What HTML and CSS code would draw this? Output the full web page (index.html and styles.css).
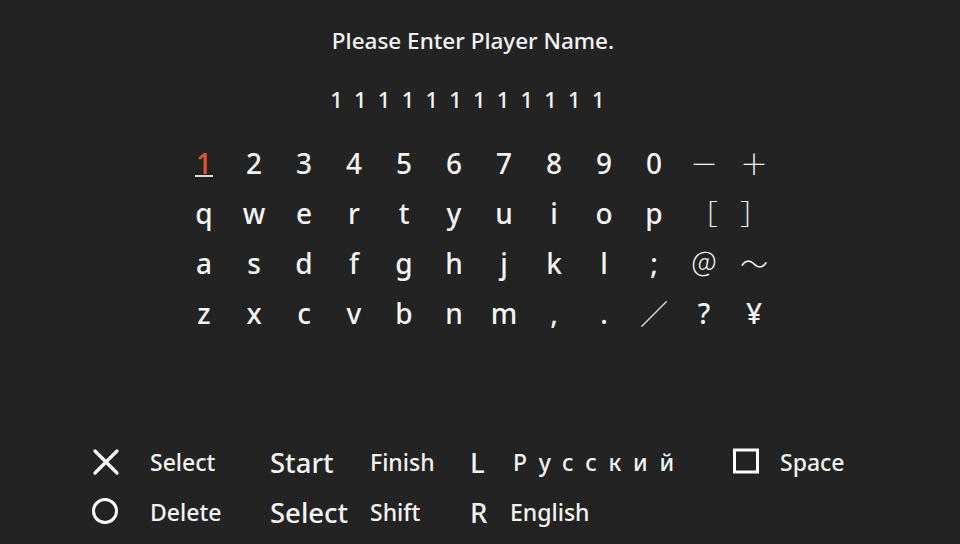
FILE: index.html
```html
<!DOCTYPE html>
<html lang="en">
<head>
    <meta charset="UTF-8">
    <meta name="viewport" content="width=device-width, initial-scale=1.0">
    <title>Enter Name</title>
    <link rel="stylesheet" href="styles.css">
</head>
<body>
    <main class="screen">
        <h1 class="prompt">Please Enter Player Name.</h1>
        <p class="name">111111111111</p>

        <!-- Character grid -->
        <section class="keys">
            <span class="key active">1</span><span class="key">2</span><span class="key">3</span><span class="key">4</span><span class="key">5</span><span class="key">6</span><span class="key">7</span><span class="key">8</span><span class="key">9</span><span class="key">0</span><span class="key wide">－</span><span class="key wide">＋</span>
            <span class="key">q</span><span class="key">w</span><span class="key">e</span><span class="key">r</span><span class="key">t</span><span class="key">y</span><span class="key">u</span><span class="key">i</span><span class="key">o</span><span class="key">p</span><span class="key wide">［</span><span class="key wide">］</span>
            <span class="key">a</span><span class="key">s</span><span class="key">d</span><span class="key">f</span><span class="key">g</span><span class="key">h</span><span class="key">j</span><span class="key">k</span><span class="key">l</span><span class="key">;</span><span class="key wide">＠</span><span class="key wide">～</span>
            <span class="key">z</span><span class="key">x</span><span class="key">c</span><span class="key">v</span><span class="key">b</span><span class="key">n</span><span class="key">m</span><span class="key">,</span><span class="key">.</span><span class="key wide">／</span><span class="key">?</span><span class="key">¥</span>
        </section>

        <!-- Button legend -->
        <section class="legend">
            <span class="icon">
                <svg width="28" height="28" viewBox="0 0 28 28"><path d="M3 3 L25 25 M25 3 L3 25" stroke="#fff" stroke-width="3.2" stroke-linecap="round" fill="none"/></svg>
            </span>
            <span class="label">Select</span>
            <span class="big">Start</span>
            <span class="label">Finish</span>
            <span class="big">L</span>
            <span class="label russian">Русский</span>
            <span class="icon">
                <svg width="28" height="28" viewBox="0 0 28 28"><rect x="1.5" y="2" width="23" height="22" stroke="#fff" stroke-width="3" fill="none"/></svg>
            </span>
            <span class="label">Space</span>

            <span class="icon">
                <svg width="28" height="28" viewBox="0 0 28 28"><circle cx="13" cy="13" r="11.5" stroke="#fff" stroke-width="3" fill="none"/></svg>
            </span>
            <span class="label">Delete</span>
            <span class="big">Select</span>
            <span class="label">Shift</span>
            <span class="big">R</span>
            <span class="label english">English</span>
        </section>
    </main>
</body>
</html>
```

FILE: styles.css
```css
body {
    margin: 0;
    padding: 0;
    background-color: #232323;
    color: #f4f4f4;
    font-family: "Noto Sans", "Open Sans", sans-serif;
    font-weight: 500;
}

.screen {
    width: 960px;
    height: 544px;
    overflow: hidden;
}

.prompt {
    margin: 26px 0 0 0;
    padding-right: 14px;
    font-size: 22.5px;
    font-weight: 500;
    line-height: 30px;
    text-align: center;
    letter-spacing: 0;
}

.name {
    margin: 28px 0 0 0;
    padding-right: 26px;
    font-size: 22px;
    line-height: 30px;
    text-align: center;
    letter-spacing: 11.2px;
    text-indent: 12px;
}

.keys {
    display: grid;
    grid-template-columns: repeat(12, 50px);
    grid-auto-rows: 50px;
    justify-content: center;
    margin-top: 24px;
    padding-right: 2px;
}

.key {
    display: flex;
    align-items: center;
    justify-content: center;
    font-size: 28px;
    line-height: 1;
}

.key.wide {
    font-family: "Noto Sans CJK JP", "Noto Sans", sans-serif;
    font-weight: 300;
    font-size: 28px;
}

.key.active {
    color: #e4572e;
    position: relative;
}

.key.active::after {
    content: "";
    position: absolute;
    left: 16px;
    width: 18px;
    bottom: 11px;
    height: 2px;
    background-color: #d8d8d8;
}

.legend {
    display: grid;
    grid-template-columns: 58px 120px 100px 100px 43px 220px 47px 120px;
    grid-auto-rows: 50px;
    margin-top: 99px;
    padding-left: 92px;
}

.legend > span {
    display: flex;
    align-items: center;
}

.label {
    font-size: 23px;
}

.big {
    font-size: 27.5px;
}

.russian {
    letter-spacing: 11.8px;
}

.english {
    margin-left: -3px;
}
```
